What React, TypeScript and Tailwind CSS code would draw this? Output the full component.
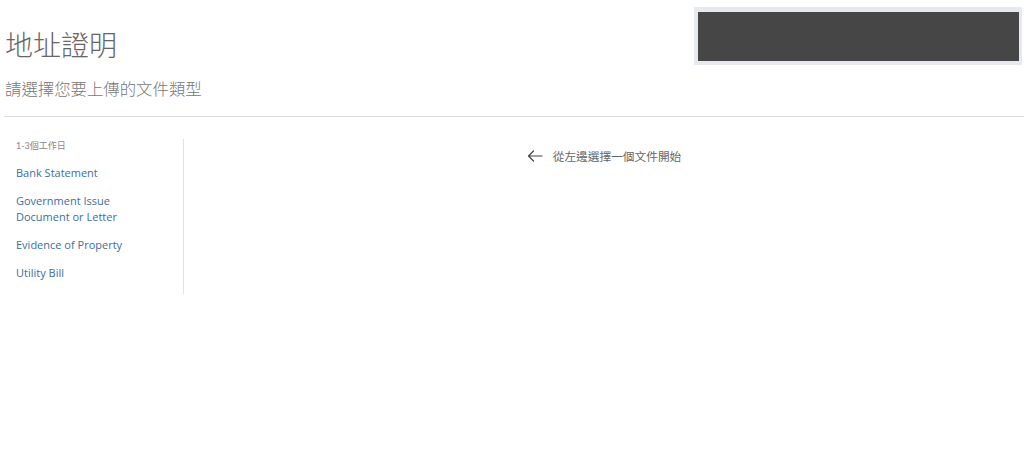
const cjk = "font-['Lato','Noto_Sans_CJK_TC',sans-serif]";

const docs = [
  "Bank Statement",
  "Government Issue Document or Letter",
  "Evidence of Property",
  "Utility Bill",
];

export default function App() {
  return (
    <div className={`w-[1024px] h-[462px] bg-white ${cjk}`}>
      {/* Header */}
      <div className="flex items-start justify-between">
        <div className="pl-[5px] pt-[28px]">
          <h1 className="text-[28px] leading-[35px] font-light text-[#666]">地址證明</h1>
          <p className="mt-[15px] text-[16.4px] leading-[22px] font-light text-[#777]">
            請選擇您要上傳的文件類型
          </p>
        </div>
        <div className="mt-[7px] mr-[2px] w-[328px] h-[58px] bg-[#e6e9ef] pt-[5px] pb-[4px] pl-[4px] pr-[3px]">
          <div className="w-full h-full bg-[#464646]" />
        </div>
      </div>

      <div className="ml-[4px] mt-[16px] border-t border-[#dedede]" />

      {/* Body */}
      <div className="flex items-start mt-[22px]">
        <div className="w-[184px] border-r border-[#e2e2e2] pl-[16px] pt-[1px] pb-[13px]">
          <div className="text-[9px] leading-[12px] text-[#888]">1-3個工作日</div>
          <ul className="mt-[13px] flex flex-col gap-[12px] pr-[40px] text-[11px] leading-[16px] font-['Open_Sans',sans-serif]">
            {docs.map((d) => (
              <li key={d}>
                <a href="#" className="text-[#3d6d9e]">
                  {d}
                </a>
              </li>
            ))}
          </ul>
        </div>
        <div className="flex-1 flex justify-center pt-[10px]">
          <div className="flex items-center gap-[10px] text-[11.7px] leading-[14px] text-[#666]">
            <svg width="16" height="12" viewBox="0 0 16 12" fill="none" stroke="#444" strokeWidth="1.2" strokeLinecap="round" strokeLinejoin="round">
              <path d="M15 6H1.5M6.5 1L1.5 6l5 5" />
            </svg>
            <span>從左邊選擇一個文件開始</span>
          </div>
        </div>
      </div>
    </div>
  );
}
